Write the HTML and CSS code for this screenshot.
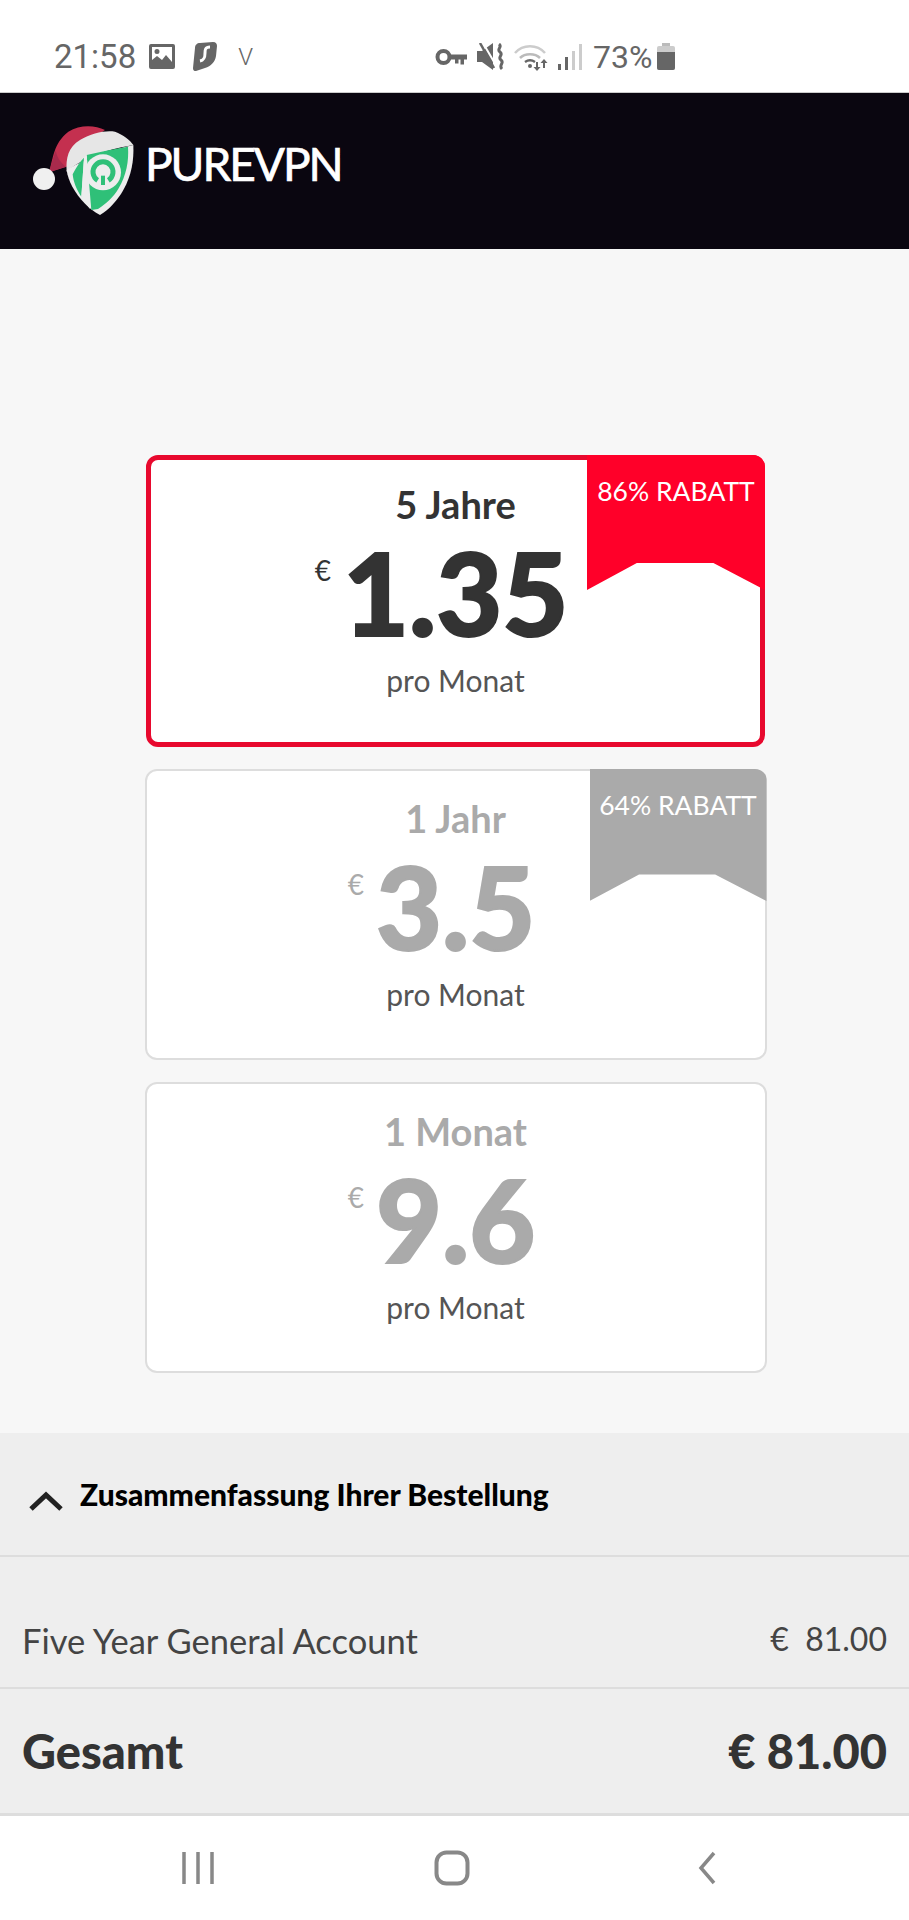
FILE: index.html
```html
<!DOCTYPE html>
<html lang="en">
<head>
    <meta charset="UTF-8">
    <meta name="viewport" content="width=device-width, initial-scale=1.0">
    <title>PureVPN</title>
    <link rel="stylesheet" href="styles.css">
</head>
<body>
    <div class="status-bar">
        <div class="status-left">
            <span class="clock">21:58</span>
            <svg class="icon-image" viewBox="0 0 26 25"><path fill="#666" fill-rule="evenodd" d="M2 0h22a2 2 0 0 1 2 2v21a2 2 0 0 1-2 2H2a2 2 0 0 1-2-2V2a2 2 0 0 1 2-2zM3 3v13l5-4 5 4 4-5 6 7V3zM8 5a2.500 2.500 0 1 1 0 5 2.500 2.500 0 0 1 0-5z"/></svg>
            <svg class="icon-surfshark" viewBox="0 0 24 29"><path fill="#666" d="M7 1 20 0c3 0 4 2 4 4l-1 10c-1 6-5 10-11 12l-9 3c-2 .5-3-1-3-3L2 6c0-3 2-5 5-5z"/><path fill="none" stroke="#fff" stroke-width="3" d="M17 5c-5 0-5 3-5 6s0 7-5 8"/></svg>
            <span class="carrier">V</span>
        </div>
        <div class="status-right">
            <svg class="icon-key" viewBox="0 0 32 18"><circle cx="8.500" cy="9" r="6" fill="none" stroke="#666" stroke-width="4"/><path fill="#666" d="M14 6.500h18v5h-3v5h-3.500v-5h-2v4H20v-4h-6z"/></svg>
            <svg class="icon-mute" viewBox="0 0 28 28"><path fill="#666" d="M0 8h5l11-8v27L5 19H0z"/><path fill="none" stroke="#fff" stroke-width="2" d="M6 0l14 24"/><path fill="none" stroke="#666" stroke-width="2.500" d="M3 0l14 25"/><path fill="none" stroke="#666" stroke-width="3" d="M22 1c4 3-3 5 1 8s-3 5 1 8-3 5 1 9"/></svg>
            <svg class="icon-wifi" viewBox="0 0 36 28"><g fill="none" stroke-width="2.500"><path stroke="#ccc" d="M1 10C9 1 23 1 31 10"/><path stroke="#bbb" d="M6 15c5-5 15-5 20 0"/><path stroke="#666" d="M11 19c3-2 7-2 10 0"/></g><circle cx="16" cy="23" r="2" fill="#666"/><path fill="#666" d="M22 19h2v5h2.500l-3.500 4-3.500-4H22zM30 16l3.500 4H31v5h-2v-5h-2.500z"/></svg>
            <svg class="icon-signal" viewBox="0 0 24 26"><rect x="0" y="20" width="3" height="6" fill="#666"/><rect x="7" y="13" width="3" height="13" fill="#666"/><rect x="14" y="7" width="3" height="19" fill="#ccc"/><rect x="21" y="0" width="3" height="26" fill="#ccc"/></svg>
            <span class="battery-text">73%</span>
            <div class="battery">
                <div class="battery-cap"></div>
                <div class="battery-body"><div class="battery-level"></div></div>
            </div>
        </div>
    </div>

    <div class="header">
        <svg class="logo" viewBox="0 0 375 315">
            <path fill="#c4304f" d="M72 172C85 130 85 85 130 50c35-22 80-20 110-5L140 110l-15 45z"/>
            <path fill="#a82a4c" d="M72 172c8-25 12-45 20-65 4 20 14 35 30 48z"/>
            <path fill="#e6e6e6" d="M125 170c-3-40 5-75 40-95 35-20 75-30 105-25 25 10 45 25 55 40-60 10-140 30-200 80z"/>
            <circle cx="57" cy="192" r="33" fill="#f0f0f0"/>
            <path fill="#ededed" d="M125 165C190 125 260 105 325 90c2 45-5 90-30 135-18 32-42 58-70 75-32-17-62-47-83-85-9-17-15-33-17-50z"/>
            <path fill="#2fc078" d="M143 178c10-20 22-38 34-50l-8 117c-14-20-24-45-26-67zM185 120c40-10 85-18 124-25 3 45-5 85-28 125-15 26-38 47-62 62l-20 3z"/>
            <path fill="#ededed" d="M177 128l8-8 5 80 5 82-26-37z"/>
            <circle cx="234" cy="172" r="54" fill="#ededed"/>
            <path fill="none" stroke="#2fc078" stroke-width="15" d="M218 196a30 30 0 1 1 32 0"/>
            <rect x="228" y="182" width="12" height="28" fill="#2fc078"/>
        </svg>
        <span class="brand">PUREVPN</span>
    </div>

    <div class="plans">
        <div class="plan plan-active">
            <div class="ribbon"><span>86% RABATT</span></div>
            <div class="plan-term">5 Jahre</div>
            <div class="plan-price"><span class="currency">€</span><span class="amount">1.35</span></div>
            <div class="plan-note">pro Monat</div>
        </div>
        <div class="plan">
            <div class="ribbon"><span>64% RABATT</span></div>
            <div class="plan-term">1 Jahr</div>
            <div class="plan-price"><span class="currency">€</span><span class="amount">3.5</span></div>
            <div class="plan-note">pro Monat</div>
        </div>
        <div class="plan">
            <div class="plan-term">1 Monat</div>
            <div class="plan-price"><span class="currency">€</span><span class="amount">9.6</span></div>
            <div class="plan-note">pro Monat</div>
        </div>
    </div>

    <div class="summary">
        <div class="summary-head">
            <svg class="chevron" viewBox="0 0 34 20"><path fill="none" stroke="#222" stroke-width="5" d="M2 18 17 4l15 14"/></svg>
            <span>Zusammenfassung Ihrer Bestellung</span>
        </div>
        <div class="summary-row">
            <span>Five Year General Account</span>
            <span class="row-price">€&nbsp; 81.00</span>
        </div>
        <div class="summary-total">
            <span>Gesamt</span>
            <span>€ 81.00</span>
        </div>
    </div>

    <div class="nav-bar">
        <svg class="nav-recent" viewBox="0 0 34 34"><path stroke="#888" stroke-width="3.500" d="M3 1v32M17 1v32M31 1v32"/></svg>
        <svg class="nav-home" viewBox="0 0 36 36"><rect x="2.500" y="2.500" width="31" height="31" rx="10" fill="none" stroke="#888" stroke-width="4"/></svg>
        <svg class="nav-back" viewBox="0 0 22 34"><path fill="none" stroke="#888" stroke-width="3.500" d="M19 2 6 17l13 15"/></svg>
    </div>
</body>
</html>
```

FILE: styles.css
```css
body {
    font-family: Lato, "Open Sans", sans-serif;
    margin: 0;
    height: 1920px;
    overflow: hidden;
    display: flex;
    flex-direction: column;
    background-color: #f7f7f7;
    color: #333;
}
.status-bar {
    height: 93px;
    flex: none;
    box-sizing: border-box;
    background-color: #fff;
    border-bottom: 1px solid #ccc;
    display: flex;
    align-items: center;
    padding: 21px 0 0 54px;
    font-family: Roboto, sans-serif;
    color: #666;
}
.status-left {
    display: flex;
    align-items: center;
    width: 381px;
}
.clock {
    font-size: 33px;
    margin-right: 13px;
}
.icon-image {
    width: 26px;
    height: 25px;
    margin-right: 18px;
}
.icon-surfshark {
    width: 24px;
    height: 29px;
    margin-right: 21px;
}
.carrier {
    font-size: 24px;
    font-weight: 300;
}
.status-right {
    display: flex;
    align-items: center;
}
.icon-key {
    width: 32px;
    height: 18px;
    margin-right: 10px;
}
.icon-mute {
    width: 28px;
    height: 28px;
    margin-right: 9px;
}
.icon-wifi {
    width: 36px;
    height: 28px;
    margin-right: 8px;
}
.icon-signal {
    width: 24px;
    height: 26px;
    margin-right: 11px;
}
.battery-text {
    font-size: 32px;
    margin-right: 5px;
}
.battery {
    display: flex;
    flex-direction: column;
    align-items: center;
    width: 18px;
}
.battery-cap {
    width: 8px;
    height: 3px;
    background-color: #bbb;
}
.battery-body {
    width: 18px;
    height: 24px;
    background-color: #ccc;
    border-radius: 2px;
    display: flex;
    align-items: flex-end;
}
.battery-level {
    width: 100%;
    height: 18px;
    background-color: #666;
    border-radius: 0 0 2px 2px;
}
.header {
    height: 156px;
    flex: none;
    background-color: #0a0610;
    display: flex;
    align-items: center;
    padding-left: 25px;
}
.logo {
    width: 125px;
    height: 105px;
    margin-right: -5px;
    margin-top: -7px;
}
.brand {
    color: #fff;
    font-size: 46px;
    letter-spacing: -2px;
    margin-top: -16px;
    -webkit-text-stroke: 0.7px #fff;
}
.plans {
    flex: 1;
    padding: 206px 0 0 2px;
    display: flex;
    flex-direction: column;
    align-items: center;
    gap: 22px;
}
.plan {
    position: relative;
    box-sizing: border-box;
    width: 622px;
    height: 291px;
    background-color: #fff;
    border: 2px solid #ddd;
    border-radius: 12px;
    display: flex;
    flex-direction: column;
    align-items: center;
    padding-top: 23px;
    color: #aaa;
}
.plan-active {
    width: 619px;
    height: 292px;
    border: 5px solid #e8092e;
    color: #333;
    padding-top: 20px;
}
.plan-term {
    font-size: 38px;
    font-weight: 700;
    line-height: 48px;
}
.plan-price {
    display: flex;
    align-items: flex-start;
    height: 118px;
    margin-top: 5px;
    margin-right: 28px;
}
.currency {
    font-size: 28px;
    font-weight: 400;
    line-height: 40px;
    margin-top: 17px;
    margin-right: 12px;
}
.amount {
    font-size: 114px;
    font-weight: 900;
    line-height: 118px;
    -webkit-text-stroke: 2px currentColor;
}
.plan-note {
    font-size: 30px;
    color: #555;
    line-height: 40px;
    margin-top: 9px;
}
.ribbon {
    position: absolute;
    top: -2px;
    right: -2px;
    width: 177px;
    height: 132px;
    background-color: #aaa;
    border-top-right-radius: 12px;
    clip-path: polygon(0 0, 100% 0, 100% 100%, 71% 80%, 28% 80%, 0 100%);
    color: #fff;
    font-size: 26.500px;
    text-align: center;
    line-height: 30px;
    padding-top: 21px;
    box-sizing: border-box;
    white-space: nowrap;
}
.plan-active .ribbon {
    top: -5px;
    right: -5px;
    width: 178px;
    height: 135px;
    background-color: #ff0029;
}
.summary {
    flex: none;
    background-color: #eee;
}
.summary-head {
    height: 124px;
    box-sizing: border-box;
    border-bottom: 2px solid #ddd;
    display: flex;
    align-items: center;
    padding-left: 29px;
    font-size: 30px;
    font-weight: 900;
    color: #000;
}
.chevron {
    width: 34px;
    height: 20px;
    margin-right: 17px;
    margin-top: 14px;
}
.summary-row {
    height: 132px;
    box-sizing: border-box;
    border-bottom: 2px solid #ddd;
    display: flex;
    justify-content: space-between;
    align-items: center;
    padding: 36px 22px 0;
    font-size: 34.500px;
    color: #444;
}
.row-price {
    font-size: 32px;
    margin-top: -3px;
}
.summary-total {
    height: 127px;
    box-sizing: border-box;
    border-bottom: 3px solid #ddd;
    display: flex;
    justify-content: space-between;
    align-items: center;
    padding: 0 22px;
    font-size: 47px;
    font-weight: 900;
}
.nav-bar {
    height: 104px;
    flex: none;
    background-color: #fff;
    display: flex;
    align-items: center;
}
.nav-recent {
    width: 34px;
    height: 34px;
    margin-left: 181px;
}
.nav-home {
    width: 36px;
    height: 36px;
    margin-left: 219px;
}
.nav-back {
    width: 22px;
    height: 34px;
    margin-left: 225px;
}
```
